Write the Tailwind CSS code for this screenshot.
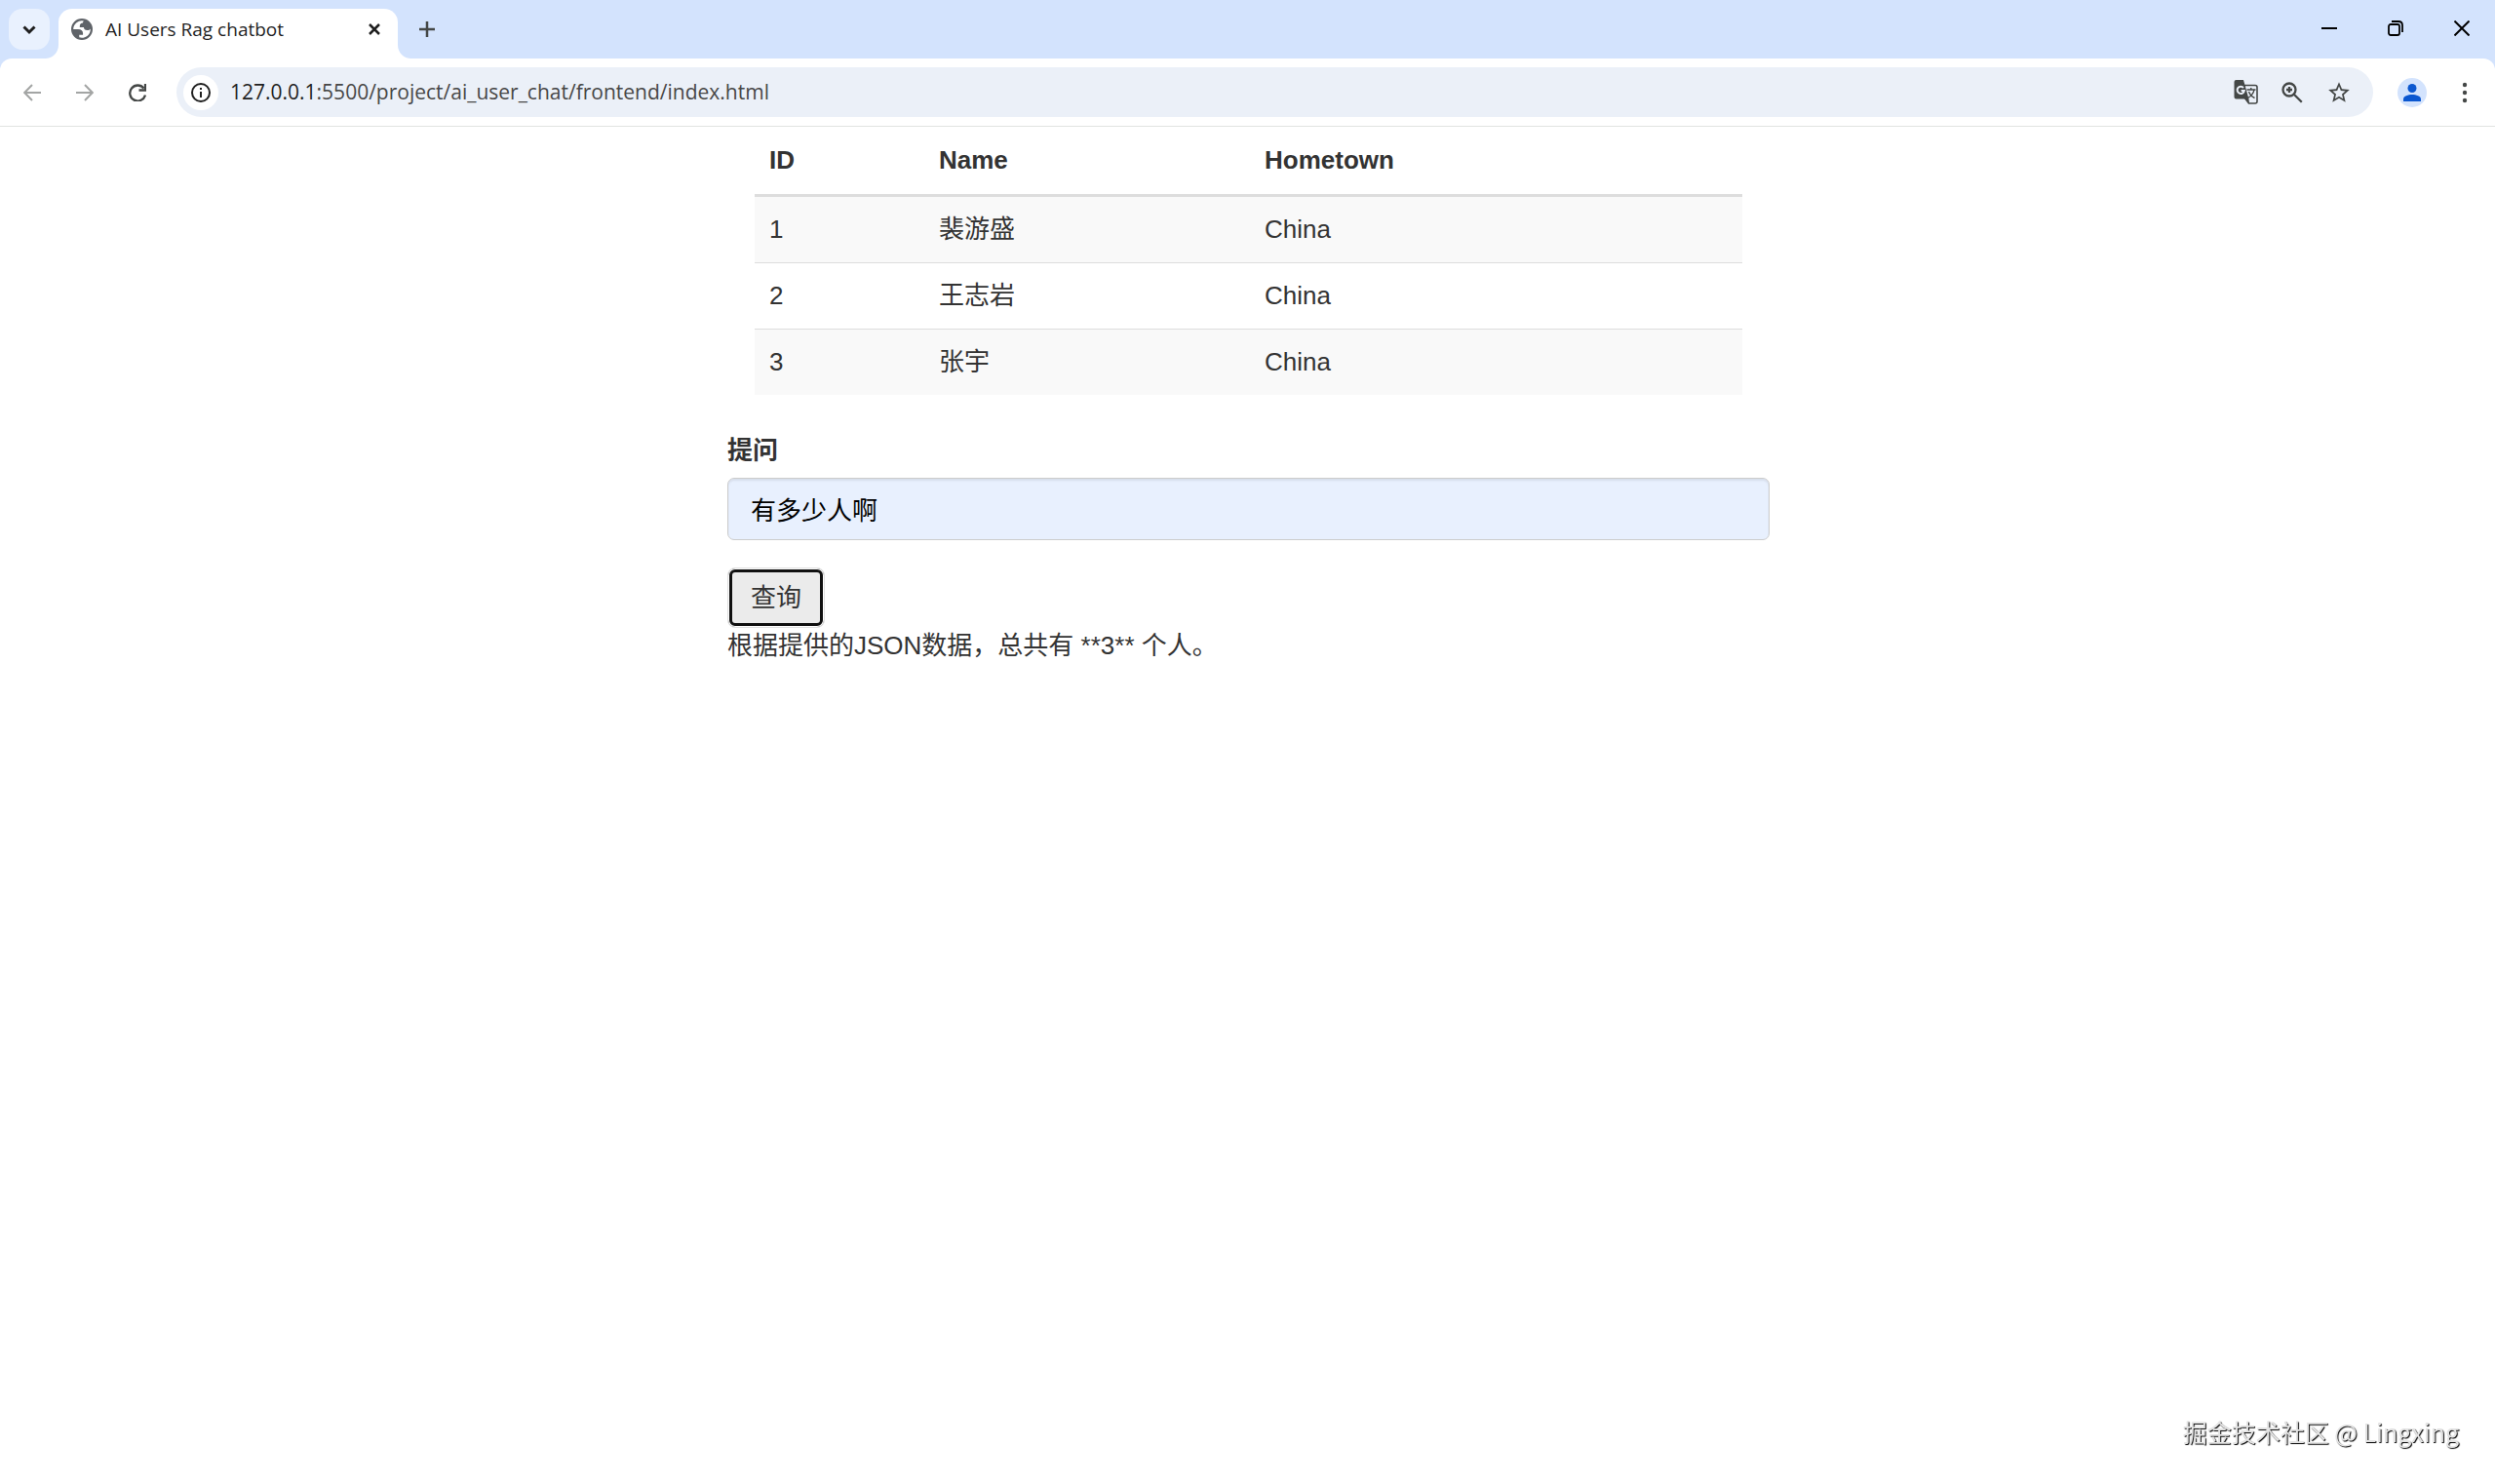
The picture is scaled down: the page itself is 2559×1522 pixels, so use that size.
<!DOCTYPE html>
<html lang="zh-CN">

<head>
    <meta charset="UTF-8">
    <meta name="viewport" content="width=device-width, initial-scale=1.0">
    <title>AI Users Rag chatbot</title>
    <script src="https://cdn.jsdelivr.net/npm/@tailwindcss/browser@4"></script>
</head>

<body class="min-h-screen bg-white font-['Liberation_Sans','Noto_Sans_CJK_SC',sans-serif] text-[26px] leading-[37px] text-[#333333]">
    <!-- browser window -->
    <header class="bg-[#d3e3fd] font-['Open_Sans','Noto_Sans',sans-serif]">
        <div class="flex h-[60px] items-start pl-[9px]">
            <button type="button" aria-label="Search tabs" class="mt-[9px] mr-[9px] flex size-[42px] items-center justify-center rounded-[14px] bg-[#e9f1fe]">
                <svg class="size-[14px]" viewBox="0 0 14 14" fill="none" stroke="#1f1f1f" stroke-width="3"><path d="M1.500 4.500l5.500 5.500 5.500-5.500" /></svg>
            </button>
            <div class="relative mt-[9px] flex h-[51px] w-[348px] items-start rounded-t-[14px] bg-white px-[13px]">
                <svg class="absolute bottom-0 -left-[14px] size-[14px]" viewBox="0 0 14 14" fill="#fff"><path d="M14 0v14H0C8 14 14 8 14 0z" /></svg>
                <svg class="absolute -right-[14px] bottom-0 size-[14px]" viewBox="0 0 14 14" fill="#fff"><path d="M0 0v14h14C6 14 0 8 0 0z" /></svg>
                <div class="flex h-[42px] w-full items-center">
                    <svg class="size-[22px]" viewBox="2 2 20 20" fill="#5f6368" fill-rule="evenodd"><path d="M12 2a10 10 0 1 1 0 20 10 10 0 0 1 0-20zM4 12h4.400c3.407.022 4.922 1.730 4.545 5.127H9.488v2.470a8.004 8.004 0 0 0 10.498-8.083C19.327 12.504 18.332 13 17 13c-2.137 0-3.206-.916-3.206-2.750h-3.748c-.274-2.728.683-4.092 2.870-4.092 0-.975.327-1.597.811-1.970A8.004 8.004 0 0 0 4 12z" /></svg>
                    <span class="ml-[13px] flex-1 text-[19px] text-[#1f1f1f]">AI Users Rag chatbot</span>
                    <button type="button" aria-label="Close tab" class="mr-[5px]">
                        <svg class="block size-[12px]" viewBox="0 0 12 12" stroke="#1f1f1f" stroke-width="2.500"><path d="M1 1l10 10M11 1L1 11" /></svg>
                    </button>
                </div>
            </div>
            <button type="button" aria-label="New tab" class="mt-[9px] ml-[9px] flex size-[42px] items-center justify-center">
                <svg class="size-[16px]" viewBox="0 0 16 16" stroke="#444746" stroke-width="2.500"><path d="M8 0v16M0 8h16" /></svg>
            </button>
            <div class="ml-auto flex h-[58px]">
                <button type="button" aria-label="Minimize" class="flex w-[68px] items-center justify-center">
                    <svg class="size-[16px]" viewBox="0 0 16 16" stroke="#000" stroke-width="2"><path d="M0 8h16" /></svg>
                </button>
                <button type="button" aria-label="Restore" class="flex w-[68px] items-center justify-center">
                    <svg class="size-[16px]" viewBox="0 0 16 16" fill="none" stroke="#000" stroke-width="1.800"><rect x="1" y="4" width="11" height="11" rx="2" /><path d="M4 1h7q4 0 4 4v7" /></svg>
                </button>
                <button type="button" aria-label="Close" class="flex w-[68px] items-center justify-center">
                    <svg class="size-[16px]" viewBox="0 0 16 16" stroke="#000" stroke-width="2"><path d="M.5.5l15 15M15.500.5l-15 15" /></svg>
                </button>
            </div>
        </div>

        <div class="flex h-[70px] items-center rounded-t-[12px] border-b border-[#e1e3e1] bg-white pr-[14px] pl-[15px]">
            <div class="flex gap-[18px]">
                <button type="button" aria-label="Back" class="flex size-[36px] items-center justify-center">
                    <svg class="size-[18px]" viewBox="0 0 18 18" fill="none" stroke="#a3a5a4" stroke-width="2"><path d="M18 9H1.500M9 1L1.200 9 9 17" /></svg>
                </button>
                <button type="button" aria-label="Forward" class="flex size-[36px] items-center justify-center">
                    <svg class="size-[18px]" viewBox="0 0 18 18" fill="none" stroke="#a3a5a4" stroke-width="2"><path d="M0 9h16.500M9 1l7.800 8L9 17" /></svg>
                </button>
                <button type="button" aria-label="Reload" class="flex size-[36px] items-center justify-center">
                    <svg class="size-[18px]" viewBox="0 0 18 18" fill="none" stroke="#444746" stroke-width="2.300"><path d="M15.500 4.500A8 8 0 1 0 17 11.500M17 0v6.500h-6.500" /></svg>
                </button>
            </div>
            <div class="mr-[25px] ml-[22px] flex h-[51px] flex-1 items-center rounded-full bg-[#ebf0f8] pr-[22px] pl-[7px]">
                <button type="button" aria-label="View site information" class="flex size-[36px] items-center justify-center rounded-full bg-white">
                    <svg class="size-[20px]" viewBox="0 0 20 20" fill="none" stroke="#1f1f1f" stroke-width="2"><circle cx="10" cy="10" r="9" /><path d="M10 9v6M10 5v2" /></svg>
                </button>
                <!-- host is darker than the rest of the address -->
                <div class="ml-[12px] flex-1 text-[21px] text-[#474747]"><span class="text-[#1f1f1f]">127.0.0.1</span>:5500/project/ai_user_chat/frontend/index.html</div>
                <div class="flex items-center gap-[24px]">
                    <button type="button" aria-label="Translate this page">
                        <svg class="block size-[25px]" viewBox="0 0 25 25"><path d="M11 5.500h11a2 2 0 0 1 2 2V22a2 2 0 0 1-2 2h-6.500L11 18z" fill="none" stroke="#444746" stroke-width="1.600" /><path d="M13.500 10h9M17.800 8v2M21 10c-.7 4-3 6.500-6.500 8.500M15.500 12c1 3 3 5 6 6.500" fill="none" stroke="#444746" stroke-width="1.400" /><path d="M2.500 0H10l5.500 19.500h-13a2 2 0 0 1-2-2V2a2 2 0 0 1 2-2zM11.500 19.500h4L16 24z" fill="#444746" /><path d="M10 8a3.600 3.600 0 1 0 .8 3H7.600" fill="none" stroke="#ebf0f8" stroke-width="2" /></svg>
                    </button>
                    <button type="button" aria-label="Zoom">
                        <svg class="block size-[22px]" viewBox="0 0 22 22" fill="none" stroke="#444746" stroke-width="2.300"><circle cx="8" cy="8" r="6.500" /><path d="M12.800 12.800l8 8M8 5v6M5 8h6" /></svg>
                    </button>
                    <button type="button" aria-label="Bookmark this tab">
                        <svg class="block size-[26px]" viewBox="0 0 24 24" fill="#444746"><path d="M22 9.240l-7.190-.62L12 2 9.190 8.630 2 9.240l5.460 4.730L5.820 21 12 17.270 18.180 21l-1.630-7.030L22 9.240zM12 15.400l-3.760 2.270 1-4.280-3.320-2.880 4.380-.38L12 6.100l1.710 4.040 4.380.38-3.320 2.880 1 4.280L12 15.400z" /></svg>
                    </button>
                </div>
            </div>
            <button type="button" aria-label="Profile" class="mr-[22px] flex size-[30px] items-center justify-center rounded-full bg-[#d3e3fd]">
                <svg class="size-[18px]" viewBox="0 0 18 18" fill="#0b57d0"><circle cx="9" cy="4.500" r="4.500" /><path d="M0 18v-2.500C0 12.500 5 11 9 11s9 1.500 9 4.500V18z" /></svg>
            </button>
            <button type="button" aria-label="Menu" class="flex h-[36px] w-[34px] items-center justify-center">
                <svg class="h-[22px] w-[6px]" viewBox="0 0 6 22" fill="#444746"><circle cx="3" cy="3" r="2.200" /><circle cx="3" cy="11" r="2.200" /><circle cx="3" cy="19" r="2.200" /></svg>
            </button>
        </div>
    </header>

    <main class="mx-auto w-full max-w-[1071px] pl-[2px]">
        <div class="px-[28px]">
            <table class="w-full border-collapse text-left" id="users">
                <thead>
                    <tr class="border-b-3 border-[#dddddd]">
                        <th class="w-[174px] px-[15px] py-[16px]">ID</th>
                        <th class="w-[334px] px-[15px] py-[16px]">Name</th>
                        <th class="px-[15px] py-[16px]">Hometown</th>
                    </tr>
                </thead>
                <tbody>
                    <tr class="bg-[#f9f9f9]">
                        <td class="p-[15px]">1</td>
                        <td class="p-[15px]">裴游盛</td>
                        <td class="p-[15px]">China</td>
                    </tr>
                    <tr class="border-t border-[#dddddd]">
                        <td class="p-[15px]">2</td>
                        <td class="p-[15px]">王志岩</td>
                        <td class="p-[15px]">China</td>
                    </tr>
                    <tr class="border-t border-[#dddddd] bg-[#f9f9f9]">
                        <td class="p-[15px]">3</td>
                        <td class="p-[15px]">张宇</td>
                        <td class="p-[15px]">China</td>
                    </tr>
                </tbody>
            </table>
        </div>
        <form class="mt-[39px]" id="question-form">
            <label for="question" class="mb-[9px] block font-bold">提问</label>
            <input type="text" id="question" name="question" value="有多少人啊"
                class="block h-[64px] w-full rounded-[7px] border border-[#cccccc] bg-[#e8f0fe] px-[23px] pb-[2px] text-black shadow-[inset_0_2px_2px_rgba(0,0,0,0.075)] focus:outline-none">
            <button type="submit"
                class="mt-[28px] block h-[62px] rounded-[8px] border border-[#e0e0e0] bg-[#ebebeb] px-[23px] shadow-[inset_0_0_0_1px_#fff,inset_0_0_0_4px_#101010]">查询</button>
        </form>
        <div id="message">根据提供的JSON数据，总共有 **3** 个人。</div>
    </main>

    <div class="fixed right-[37px] bottom-[35px] font-['Noto_Sans_CJK_SC',sans-serif] text-[25px] text-[#e4e4e4] [text-shadow:1px_1px_1px_#000]">掘金技术社区 @ Lingxing</div>
</body>

<script>
    const form = document.querySelector('#question-form')
    form.addEventListener('submit', async (e) => {
        e.preventDefault()
        const question = document.querySelector('#question').value.trim()
        if (!question) return
        const response = await fetch('http://localhost:1314/?question=' + encodeURIComponent(question))
        const data = await response.json()
        document.querySelector('#message').innerText = data.result
    })
</script>

</html>
